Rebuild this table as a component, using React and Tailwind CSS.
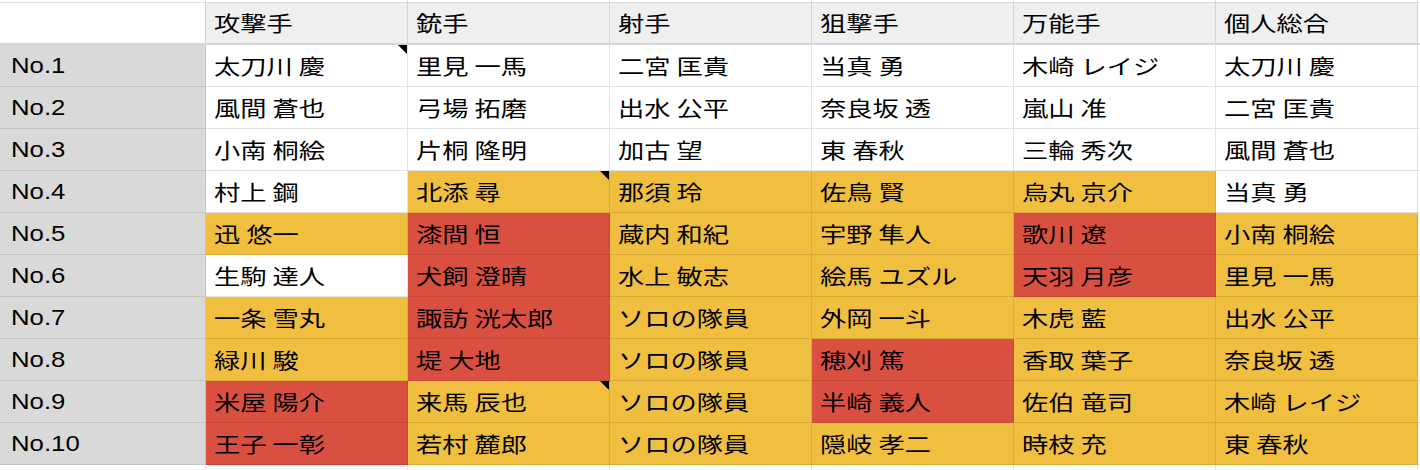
import React from "react";

const headers = ["攻撃手", "銃手", "射手", "狙撃手", "万能手", "個人総合"];

const rows = [
  ["太刀川 慶", "里見 一馬", "二宮 匡貴", "当真 勇", "木崎 レイジ", "太刀川 慶"],
  ["風間 蒼也", "弓場 拓磨", "出水 公平", "奈良坂 透", "嵐山 准", "二宮 匡貴"],
  ["小南 桐絵", "片桐 隆明", "加古 望", "東 春秋", "三輪 秀次", "風間 蒼也"],
  ["村上 鋼", "北添 尋", "那須 玲", "佐鳥 賢", "烏丸 京介", "当真 勇"],
  ["迅 悠一", "漆間 恒", "蔵内 和紀", "宇野 隼人", "歌川 遼", "小南 桐絵"],
  ["生駒 達人", "犬飼 澄晴", "水上 敏志", "絵馬 ユズル", "天羽 月彦", "里見 一馬"],
  ["一条 雪丸", "諏訪 洸太郎", "ソロの隊員", "外岡 一斗", "木虎 藍", "出水 公平"],
  ["緑川 駿", "堤 大地", "ソロの隊員", "穂刈 篤", "香取 葉子", "奈良坂 透"],
  ["米屋 陽介", "来馬 辰也", "ソロの隊員", "半崎 義人", "佐伯 竜司", "木崎 レイジ"],
  ["王子 一彰", "若村 麓郎", "ソロの隊員", "隠岐 孝二", "時枝 充", "東 春秋"],
];

// w = white, y = yellow, r = red
const colors = [
  "wwwwww",
  "wwwwww",
  "wwwwww",
  "wyyyyw",
  "yryyry",
  "wryyry",
  "yryyyy",
  "yryryy",
  "ryyryy",
  "ryyyyy",
];

const notes = { "0-0": true, "3-1": true, "8-1": true };

const cellCls = {
  w: "bg-white border-[#e2e2e2]",
  y: "bg-[#f1bf40] border-[#d9aa3a]",
  r: "bg-[#d95040] border-[#c4473a]",
};

const jp = { fontFamily: '"Noto Sans CJK JP", "Noto Sans", sans-serif' };
const lat = { fontFamily: '"Liberation Sans", Arial, sans-serif' };

function JP({ children }) {
  return (
    <span
      style={jp}
      className="inline-block origin-left scale-x-[1.25] whitespace-nowrap text-[21px] leading-none"
    >
      {children}
    </span>
  );
}

export default function App() {
  return (
    <div className="w-[1420px] h-[470px] overflow-hidden bg-white text-black">
      {/* sliver row above */}
      <div className="flex h-[3px]">
        <div className="w-[206px] shrink-0 border-r border-b border-[#e2e2e2]" />
        {headers.map((h) => (
          <div key={h} className="w-[202px] shrink-0 border-r border-b border-[#dadada]" />
        ))}
        <div className="flex-1 border-b border-[#e2e2e2]" />
      </div>
      {/* header row */}
      <div className="flex h-[42px]">
        <div className="w-[206px] shrink-0 bg-white border-r border-b-2 border-[#d6d6d6]" />
        {headers.map((h) => (
          <div
            key={h}
            className="w-[202px] shrink-0 bg-[#efefef] border-r border-b-2 border-[#d6d6d6] flex items-center pl-[8px] pb-[2px]"
          >
            <JP>{h}</JP>
          </div>
        ))}
        <div className="flex-1 border-b-2 border-[#d6d6d6]" />
      </div>
      {rows.map((r, i) => (
        <div key={i} className="flex h-[42px]">
          <div className="w-[206px] shrink-0 bg-[#d9d9d9] border-r border-b border-[#c4c4c4] flex items-center pl-[11px]">
            <span
              style={lat}
              className="inline-block origin-left scale-x-[1.17] whitespace-nowrap text-[22px] leading-none"
            >
              No.{i + 1}
            </span>
          </div>
          {r.map((name, j) => (
            <div
              key={j}
              className={
                "relative w-[202px] shrink-0 border-r border-b flex items-center pl-[8px] pb-[1px] " +
                cellCls[colors[i][j]]
              }
            >
              <JP>{name}</JP>
              {notes[`${i}-${j}`] && (
                <div className="absolute top-0 right-0 w-0 h-0 border-l-[9px] border-l-transparent border-t-[9px] border-t-black" />
              )}
            </div>
          ))}
          <div className="flex-1 border-b border-[#e2e2e2]" />
        </div>
      ))}
      <div className="flex h-[6px]">
        <div className="w-[206px] shrink-0 border-r border-[#e2e2e2]" />
        {headers.map((h) => (
          <div key={h} className="w-[202px] shrink-0 border-r border-[#e2e2e2]" />
        ))}
      </div>
    </div>
  );
}
